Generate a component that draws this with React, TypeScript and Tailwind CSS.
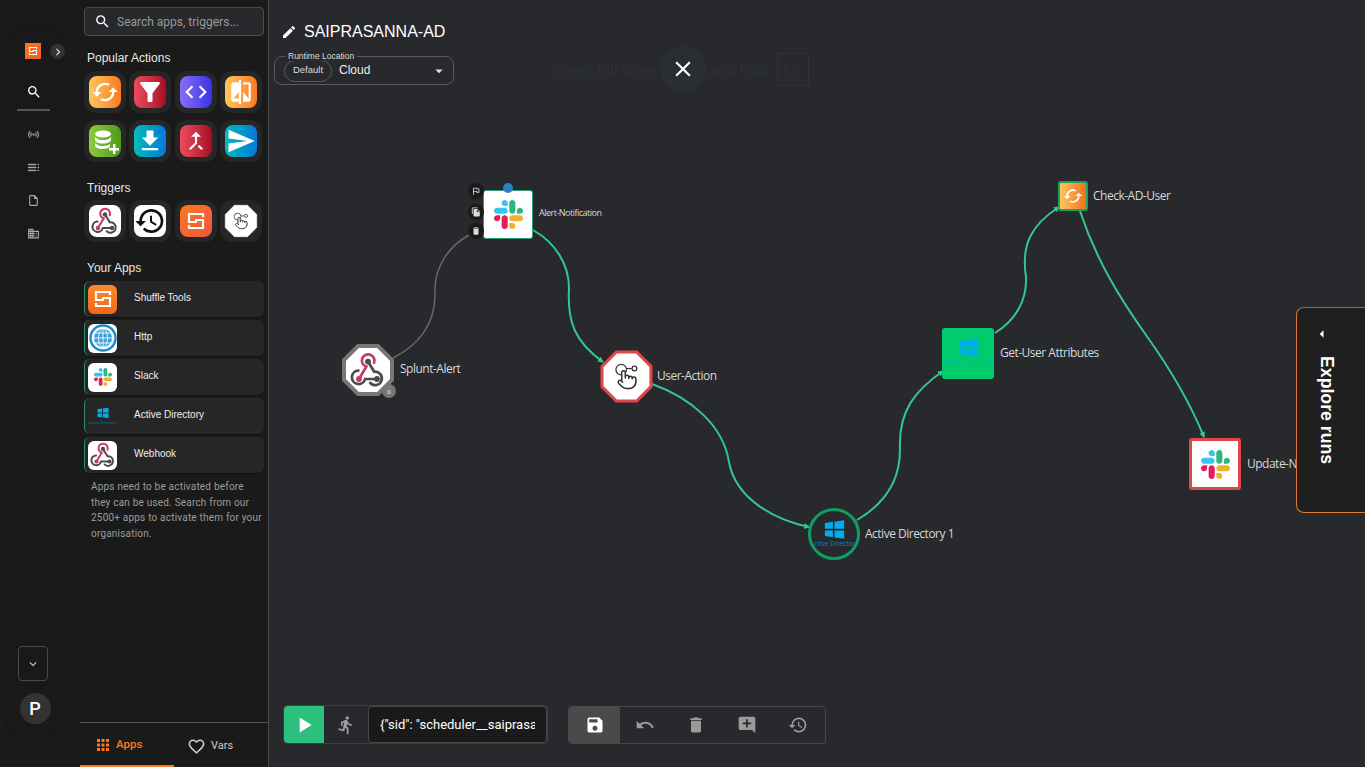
import React from "react";
import { Pointer } from "lucide-react";
import {
  MdCached, MdFilterAlt, MdCode, MdCompare, MdFileDownload, MdCallMerge, MdSend, MdHistory, MdSearch,
  MdChevronRight, MdExpandMore, MdOutlineSensors, MdOutlineInsertDriveFile, MdOutlineDomain,
  MdApps, MdFavoriteBorder, MdEdit, MdArrowDropDown, MdClose, MdPlayArrow, MdDirectionsRun, MdSave, MdUndo,
  MdDelete, MdAddComment, MdOutlineFlag, MdFileCopy, MdArrowLeft,
} from "react-icons/md";

const Slack = ({ className = "" }: { className?: string }) => (
  <svg viewBox="0 0 122.8 122.8" className={className}>
    <path fill="#E01E5A" d="M25.8 77.6c0 7.1-5.8 12.9-12.9 12.9S0 84.7 0 77.6s5.8-12.9 12.9-12.9h12.9v12.9zM32.3 77.6c0-7.1 5.8-12.9 12.9-12.9s12.9 5.8 12.9 12.9v32.3c0 7.1-5.8 12.9-12.9 12.9s-12.9-5.8-12.9-12.9V77.6z" />
    <path fill="#36C5F0" d="M45.2 25.8c-7.1 0-12.9-5.8-12.9-12.9S38.1 0 45.2 0s12.9 5.8 12.9 12.9v12.9H45.2zM45.2 32.3c7.1 0 12.9 5.8 12.9 12.9s-5.8 12.9-12.9 12.9H12.9C5.8 58.1 0 52.3 0 45.2s5.8-12.9 12.9-12.9h32.3z" />
    <path fill="#2EB67D" d="M97 45.2c0-7.1 5.8-12.9 12.9-12.9s12.9 5.8 12.9 12.9-5.8 12.9-12.9 12.9H97V45.2zM90.5 45.2c0 7.1-5.8 12.9-12.9 12.9s-12.9-5.8-12.9-12.9V12.9C64.7 5.8 70.5 0 77.6 0s12.9 5.8 12.9 12.9v32.3z" />
    <path fill="#ECB22E" d="M77.6 97c7.1 0 12.9 5.8 12.9 12.9s-5.8 12.9-12.9 12.9-12.9-5.8-12.9-12.9V97h12.9zM77.6 90.5c-7.1 0-12.9-5.8-12.9-12.9s5.8-12.9 12.9-12.9h32.3c7.1 0 12.9 5.8 12.9 12.9s-5.8 12.9-12.9 12.9H77.6z" />
  </svg>
);

const Webhook = ({ className = "" }: { className?: string }) => (
  <svg viewBox="0 0 32 32" className={className} fill="none" strokeWidth="2.4" strokeLinecap="round">
    <path stroke="#4b4b4b" d="M7.5 16.5A6 6 0 1 0 13.5 24H24" />
    <path stroke="#4b4b4b" d="M16 8.5L21.5 17.5A6 6 0 1 1 18 27.6" />
    <path stroke="#c73a63" d="M8 24L14.5 13A5.6 5.6 0 1 1 21.4 9.6" />
    <circle cx="8" cy="24" r="2.6" fill="#c73a63" />
    <circle cx="16" cy="8.5" r="2.6" fill="#4b4b4b" />
    <circle cx="24" cy="24" r="2.6" fill="#4b4b4b" />
  </svg>
);

const ShuffleMark = ({ className = "" }: { className?: string }) => (
  <svg viewBox="0 0 24 24" className={className} fill="none" stroke="white" strokeWidth="2.2">
    <path d="M19 8V5H5v8h8" />
    <path d="M5 16v3h14v-8h-8" />
  </svg>
);

const Windows = ({ className = "" }: { className?: string }) => (
  <svg viewBox="0 0 24 24" className={className} fill="#00adef">
    <path d="M1 4.500L10.200 3.200V11H1zM12 3L23 1.400V11H12zM1 13H10.200V20.800L1 19.500zM12 13H23V22.600L12 21z" />
  </svg>
);

const Octagon = ({ stroke, strokeWidth = 4, children, className = "" }: { stroke: string; strokeWidth?: number; children?: React.ReactNode; className?: string }) => (
  <svg viewBox="0 0 52 52" className={className}>
    <polygon points="16,2 36,2 50,16 50,36 36,50 16,50 2,36 2,16" fill="white" stroke={stroke} strokeWidth={strokeWidth} />
    {children}
  </svg>
);

const TouchMark = ({ size }: { size: number }) => {
  const off = (52 - size) / 2;
  return (
    <>
      <circle cx={off + size * 0.3} cy={off + size * 0.24} r={size * 0.2} fill="none" stroke="#333" strokeWidth="1.2" />
      <circle cx={off + size * 0.8} cy={off + size * 0.2} r={size * 0.09} fill="none" stroke="#333" strokeWidth="1.2" />
      <path d={`M${off + size * 0.5} ${off + size * 0.2}H${off + size * 0.7}`} stroke="#333" strokeWidth="1.2" />
      <Pointer x={off + size * 0.12} y={off + size * 0.22} width={size * 0.8} height={size * 0.8} color="#333" strokeWidth={1.7} fill="white" />
    </>
  );
};

const DbPlus = () => (
  <svg viewBox="0 0 32 32" className="w-8 h-8">
    <g fill="white">
      <ellipse cx="14" cy="9" rx="8" ry="3.5" />
      <path d="M6 12c1.500 2 4.500 3.100 8 3.100s6.500-1.100 8-3.100v3c0 1.900-3.600 3.500-8 3.500S6 16.900 6 15z" />
      <path d="M6 18c1.500 2 4.500 3.100 8 3.100s5.500-.7 7-2v2.700c-1.500 1.300-4 2.200-7 2.200-4.400 0-8-1.600-8-3.500z" />
      <path d="M24 19h2.400v4H30v2.400h-3.600V29H24v-3.600h-4V23h4z" />
    </g>
  </svg>
);

// three bars with dots on the right, rail item
const ListDots = () => (
  <svg viewBox="0 0 14 14" className="w-[13px] h-[13px] mt-[20px]" fill="#aaa">
    <rect x="1" y="3" width="9" height="1.500" />
    <rect x="1" y="6.200" width="9" height="1.500" />
    <rect x="1" y="9.400" width="9" height="1.500" />
    <rect x="11.500" y="3" width="1.500" height="1.500" />
    <rect x="11.500" y="6.200" width="1.500" height="1.500" />
    <rect x="11.500" y="9.400" width="1.500" height="1.500" />
  </svg>
);

const popular = [
  { icon: <MdCached className="text-white text-[28px]" />, bg: "bg-gradient-to-r from-[#fcc65c] to-[#fb7a1e]" },
  { icon: <MdFilterAlt className="text-white text-[30px]" />, bg: "bg-gradient-to-r from-[#ee4b5e] to-[#a80a25]" },
  { icon: <MdCode className="text-white text-[26px]" />, bg: "bg-gradient-to-r from-[#8a6bf5] to-[#3a2fe8]" },
  { icon: <MdCompare className="text-white text-[26px]" />, bg: "bg-gradient-to-r from-[#fcc65c] to-[#fb7a1e]" },
  { icon: <DbPlus />, bg: "bg-gradient-to-r from-[#8ccc3c] to-[#4e9a1c]" },
  { icon: <MdFileDownload className="text-white text-[28px]" />, bg: "bg-gradient-to-r from-[#0fbcb8] to-[#0a78d8]" },
  { icon: <MdCallMerge className="text-white text-[26px]" />, bg: "bg-gradient-to-r from-[#ee4b5e] to-[#a80a25]" },
  { icon: <MdSend className="text-white text-[30px]" />, bg: "bg-gradient-to-r from-[#0fbcb8] to-[#0a78d8]" },
];

const Tile = ({ children, className = "" }: { children: React.ReactNode; className?: string }) => (
  <div className="w-[42px] h-[42px] rounded-xl bg-[#262626] flex items-center justify-center">
    <div className={`w-8 h-8 rounded-lg flex items-center justify-center overflow-hidden ${className}`}>{children}</div>
  </div>
);

const yourApps = [
  { name: "Shuffle Tools", icon: <div className="w-full h-full bg-gradient-to-b from-[#fb8a2a] to-[#f2661a] flex items-center justify-center"><ShuffleMark className="w-6 h-6" /></div> },
  {
    name: "Http",
    icon: (
      <div className="w-full h-full bg-white flex items-center justify-center">
        <svg viewBox="0 0 28 28" className="w-[28px] h-[28px]" fill="none" stroke="#1e8ccc">
          <circle cx="14" cy="14" r="12.500" strokeWidth="2.500" />
          <circle cx="14" cy="14" r="9.500" fill="#3aa0dc" stroke="none" />
          <g stroke="white" strokeWidth="0.9">
            <circle cx="14" cy="14" r="9.500" />
            <ellipse cx="14" cy="14" rx="4.500" ry="9.500" />
            <path d="M14 4.500V23.500M4.500 14H23.500M6 9H22M6 19H22" />
          </g>
        </svg>
      </div>
    ),
  },
  { name: "Slack", icon: <div className="w-full h-full bg-white flex items-center justify-center"><Slack className="w-[18px] h-[18px]" /></div> },
  {
    name: "Active Directory",
    icon: (
      <div className="w-full h-full flex flex-col items-center justify-center">
        <Windows className="w-3 h-3" />
        <span className="text-[4px] leading-[5px] mt-px text-[#0a6ea8] whitespace-nowrap">Active Directory</span>
      </div>
    ),
  },
  { name: "Webhook", icon: <div className="w-full h-full bg-white flex items-center justify-center"><Webhook className="w-[26px] h-[26px]" /></div> },
];

const Label = ({ className, children }: { className: string; children: React.ReactNode }) => (
  <span className={`absolute -translate-y-1/2 text-[12px] text-[#d8d8d8] whitespace-nowrap font-['Open_Sans',sans-serif] tracking-[-0.5px] ${className}`}>
    {children}
  </span>
);

const Edges = () => (
  <svg viewBox="0 0 1097 767" className="absolute inset-0 w-[1097px] h-[767px]" fill="none" strokeWidth="2" stroke="#33c692">
    <defs>
      <marker id="arrow" markerWidth="7" markerHeight="7" refX="5" refY="3" orient="auto" markerUnits="userSpaceOnUse">
        <path d="M0 0L6 3L0 6z" fill="#33c692" stroke="none" />
      </marker>
    </defs>
    <path stroke="#686868" strokeWidth="1.500" d="M124 358C148 346 167 325 166 292C165 265 182 245 200 235" />
    <path markerEnd="url(#arrow)" d="M264 230C287 243 300 265 300 288C298 322 306 342 334 362" />
    <path markerEnd="url(#arrow)" d="M383 384C422 398 454 425 460 462C467 500 507 520 540 527" />
    <path markerEnd="url(#arrow)" d="M588 520C617 503 631 480 631 450C629 410 647 390 674 371" />
    <path markerEnd="url(#arrow)" d="M726 333C747 320 758 300 757 277C752 245 762 225 790 207" />
    <path markerEnd="url(#arrow)" d="M811 211C827 260 852 300 877 335C902 370 922 405 935 437" />
  </svg>
);

export default function App() {
  return (
    <div className="h-screen w-full overflow-hidden flex bg-[#1a1a1a] text-white font-['Roboto',sans-serif]">
      {/* Left rail */}
      <div className="w-20 shrink-0 bg-[#1a1a1a] pl-[7px] pt-[25px] pb-[29px]">
        <div className="relative w-[53px] h-full rounded-2xl bg-[#191919] shadow-[0_0_2px_#141414] flex flex-col items-center pt-[18px]">
          <div className="w-4 h-4 bg-gradient-to-br from-[#fb7a1e] to-[#ee5a2c] flex items-center justify-center -ml-[1px]">
            <ShuffleMark className="w-3 h-3" />
          </div>
          <div className="absolute left-[43px] top-[19px] w-[15px] h-[15px] rounded-full bg-[#333] flex items-center justify-center">
            <MdChevronRight className="text-[14px] text-[#ddd]" />
          </div>
          <MdSearch className="text-[16px] text-white mt-[25px]" />
          <div className="w-[33px] h-[2px] bg-[#555] mt-[9px]" />
          <MdOutlineSensors className="text-[13px] text-[#aaa] mt-[17px]" />
          <ListDots />
          <MdOutlineInsertDriveFile className="text-[13px] text-[#aaa] mt-[20px]" />
          <MdOutlineDomain className="text-[13px] text-[#aaa] mt-[20px]" />
          <div className="mt-auto -ml-[2px] w-[30px] h-[35px] rounded-[4px] border border-[#4a4a4a] flex items-center justify-center">
            <MdExpandMore className="text-[14px] text-[#ccc]" />
          </div>
          <div className="w-[31px] h-[31px] ml-[3px] rounded-full bg-[#333] mt-[12px] mb-[14px] flex items-center justify-center text-[18px] font-medium">P</div>
        </div>
      </div>

      {/* Apps panel */}
      <div className="w-[189px] shrink-0 border-r border-[#4a4a4a] flex flex-col">
        <div className="flex-1 pl-1 pr-1">
          <div className="mt-[7px] h-[29px] w-[180px] rounded border border-[#4a4a4a] bg-[#27292d] flex items-center pl-[9px]">
            <MdSearch className="text-[17px] text-white" />
            <span className="ml-[6px] text-[12px] text-[#9a9a9a]">Search apps, triggers...</span>
          </div>
          <div className="text-[12px] text-[#e8e8e8] ml-[3px] mt-[15px] leading-[14px] font-['Liberation_Sans',sans-serif]">Popular Actions</div>
          <div className="grid grid-cols-[repeat(4,42px)] gap-x-[3.300px] gap-y-[7px] mt-[6px]">
            {popular.map((p, i) => (
              <Tile key={i} className={p.bg}>{p.icon}</Tile>
            ))}
          </div>
          <div className="text-[12px] text-[#e8e8e8] ml-[3px] mt-[19px] leading-[14px] font-['Liberation_Sans',sans-serif]">Triggers</div>
          <div className="grid grid-cols-[repeat(4,42px)] gap-x-[3.300px] mt-[5px]">
            <Tile className="bg-white"><Webhook className="w-7 h-7" /></Tile>
            <Tile className="bg-white"><MdHistory className="text-[34px] text-[#111]" /></Tile>
            <Tile className="bg-gradient-to-br from-[#fb7a10] to-[#ee5440]"><ShuffleMark className="w-6 h-6" /></Tile>
            <div className="w-[42px] h-[42px] rounded-xl bg-[#262626] flex items-center justify-center">
              <Octagon stroke="white" strokeWidth={1} className="w-[34px] h-[34px]"><TouchMark size={26} /></Octagon>
            </div>
          </div>
          <div className="text-[12px] text-[#e8e8e8] ml-[3px] mt-[19px] leading-[14px] font-['Liberation_Sans',sans-serif]">Your Apps</div>
          <div className="flex flex-col gap-[3px] mt-[6px]">
            {yourApps.map((a) => (
              <div key={a.name} className="h-[36px] w-[180px] rounded-md bg-[#262626] border-l border-l-[#2f8f6c] flex items-center pl-[3px] shadow-[0_1px_0_#111]">
                <div className="w-[29px] h-[29px] rounded-md overflow-hidden shrink-0">{a.icon}</div>
                <span className="ml-[17px] mb-[3px] text-[10px] text-[#eee] font-['Liberation_Sans',sans-serif]">{a.name}</span>
              </div>
            ))}
          </div>
          <p className="ml-[7px] mt-[6px] w-[174px] text-[10px] leading-[15.500px] tracking-[0.2px] text-[#9c9c9c]">
            Apps need to be activated before<br />they can be used. Search from our<br />2500+ apps to activate them for your<br />organisation.
          </p>
        </div>
        <div className="h-[45px] border-t border-[#555] flex">
          <div className="w-[94px] h-full border-b-2 border-[#fb7a1e] pt-[2px] flex items-center pl-[14px] gap-[4px] text-[#fb7a1e]">
            <MdApps className="text-[18px]" />
            <span className="text-[11.500px] font-medium">Apps</span>
          </div>
          <div className="flex-1 flex items-center pl-[13px] gap-[5px] pt-[2px]">
            <MdFavoriteBorder className="text-[19px] text-[#ccc]" />
            <span className="text-[11px] text-[#ccc]">Vars</span>
          </div>
        </div>
      </div>

      {/* Workflow canvas */}
      <div className="relative flex-1 bg-[#27292d] overflow-hidden">
        <Edges />

        <div className="absolute left-[12px] top-[20px] flex items-center gap-[7px]">
          <MdEdit className="text-[16px] text-white" />
          <span className="text-[16px] font-['Liberation_Sans',sans-serif]">SAIPRASANNA-AD</span>
        </div>

        <div className="absolute left-[5px] top-[56px] w-[180px] h-[29px] rounded-lg border border-[#5a5a5a] flex items-center pl-[9px] font-['Liberation_Sans',sans-serif]">
          <span className="absolute left-[10px] -top-[6px] bg-[#27292d] px-[3px] text-[8.500px] leading-[10px] text-[#ddd]">Runtime Location</span>
          <span className="h-[22px] w-[48px] rounded-full border border-[#5a5a5a] flex items-center justify-center text-[9.500px] text-[#ddd]">Default</span>
          <span className="ml-[7px] mb-[1px] text-[12px] text-[#eee]">Cloud</span>
          <MdArrowDropDown className="absolute right-[5px] top-[5px] text-[18px] text-[#ddd]" />
        </div>

        {/* Faded fullscreen hint */}
        <div className="absolute left-[281px] top-[53px] flex items-center gap-[8px] text-[14px] text-[#2e3136] font-['Open_Sans',sans-serif] whitespace-nowrap">
          <span>To exit full screen, press and hold</span>
          <span className="w-[32px] h-[33px] border border-[#2e3136] flex items-center justify-center text-[12px]">Esc</span>
        </div>
        <div className="absolute left-[391px] top-[46px] w-[46px] h-[46px] rounded-full bg-[#2a2d34] flex items-center justify-center">
          <MdClose className="text-[26px] text-white" />
        </div>

        {/* Nodes */}
        <Octagon stroke="#777" strokeWidth={4} className="absolute left-[73px] top-[344px] w-[52px] h-[52px]" />
        <Webhook className="absolute left-[81px] top-[352px] w-[36px] h-[36px]" />
        <div className="absolute left-[113px] top-[384px] w-[14px] h-[14px] rounded-full bg-[#777] flex items-center justify-center text-[6px] text-[#eee]">0</div>
        <Label className="left-[131px] top-[369px]">Splunt-Alert</Label>

        <div className="absolute left-[214px] top-[190px] w-[50px] h-[49px] rounded-[3px] bg-white border border-[#2a9d78] flex items-center justify-center">
          <Slack className="w-[29px] h-[29px]" />
        </div>
        <div className="absolute left-[234px] top-[183px] w-[10px] h-[10px] rounded-full bg-[#2e7fc0]" />
        {[
          { top: 183, icon: <MdOutlineFlag /> },
          { top: 204, icon: <MdFileCopy /> },
          { top: 223, icon: <MdDelete /> },
        ].map((b) => (
          <div key={b.top} className="absolute left-[199px] w-[16px] h-[16px] rounded-full bg-[#1a1a1a] flex items-center justify-center text-[10px] text-[#ddd]" style={{ top: b.top }}>
            {b.icon}
          </div>
        ))}
        <span className="absolute left-[270px] top-[213px] -translate-y-1/2 text-[9px] text-[#d8d8d8] tracking-[-0.5px] whitespace-nowrap font-['Open_Sans',sans-serif]">Alert-Notification</span>

        <Octagon stroke="#e04848" strokeWidth={3} className="absolute left-[331px] top-[350px] w-[53px] h-[53px]"><TouchMark size={26} /></Octagon>
        <Label className="left-[388px] top-[376px]">User-Action</Label>

        <div className="absolute left-[539px] top-[508px] w-[52px] h-[52px] rounded-full border-[3px] border-[#129b62] flex flex-col items-center justify-center overflow-hidden">
          <Windows className="w-[21px] h-[21px] -mt-[2px]" />
          <span className="text-[7px] leading-[8px] text-[#0a7cc0] whitespace-nowrap">Active Directory</span>
        </div>
        <Label className="left-[596px] top-[534px]">Active Directory 1</Label>

        <div className="absolute left-[673px] top-[328px] w-[52px] h-[51px] rounded-[3px] bg-[#00cc6e] flex flex-col items-center justify-center overflow-hidden">
          <Windows className="w-[21px] h-[21px] -mt-[4px]" />
          <span className="text-[7px] leading-[8px] text-[#0ab8a8] whitespace-nowrap">Active Directory</span>
        </div>
        <Label className="left-[731px] top-[353px]">Get-User Attributes</Label>

        <div className="absolute left-[789px] top-[181px] w-[30px] h-[30px] rounded-[3px] border-[2px] border-[#15a366] bg-gradient-to-r from-[#fcc65c] to-[#f2701a] flex items-center justify-center">
          <MdCached className="text-[20px] text-white" />
        </div>
        <Label className="left-[824px] top-[196px]">Check-AD-User</Label>

        <div className="absolute left-[920px] top-[438px] w-[52px] h-[52px] rounded-[3px] border-[3px] border-[#e04848] bg-white flex items-center justify-center">
          <Slack className="w-[29px] h-[29px]" />
        </div>
        <Label className="left-[978px] top-[464px]">Update-Notification</Label>

        {/* Explore runs drawer */}
        <div className="absolute right-0 top-[307px] w-[69px] h-[206px] rounded-l-lg border border-r-0 border-[#e07a30] border-t-[#3d83b8] bg-[#1f1f1f] flex flex-col items-center pr-[10px]">
          <MdArrowLeft className="text-[18px] text-white mt-[17px] -ml-[9px]" />
          <span className="mt-[13px] ml-[1px] text-[17.700px] leading-[20px] font-bold font-['Liberation_Sans',sans-serif] [writing-mode:vertical-rl] whitespace-nowrap">Explore runs</span>
        </div>

        {/* Bottom toolbars */}
        <div className="absolute left-[14px] bottom-[23px] flex items-stretch h-[39px] rounded border border-[#3c3e42]">
          <div className="w-[40px] rounded-l bg-[#2bc07e] flex items-center justify-center">
            <MdPlayArrow className="text-[26px] text-white" />
          </div>
          <div className="w-[44px] flex items-center justify-center">
            <MdDirectionsRun className="text-[20px] text-[#a0a0a0]" />
          </div>
          <div className="w-[179px] bg-[#1a1a1a] border border-[#4a4a4a] rounded-sm flex items-center pl-[11px] overflow-hidden">
            <span className="text-[13px] text-white whitespace-nowrap w-[155px] overflow-hidden">{'{"sid": "scheduler__saiprasanna'}</span>
          </div>
        </div>
        <div className="absolute left-[299px] bottom-[23px] flex items-stretch h-[38px] rounded border border-[#46484c] overflow-hidden">
          <div className="w-[51px] bg-[#4a4a4a] flex items-center justify-center">
            <MdSave className="text-[20px] text-white" />
          </div>
          {[<MdUndo key="u" />, <MdDelete key="d" />, <MdAddComment key="a" />, <MdHistory key="h" />].map((ic, i) => (
            <div key={i} className="w-[51.250px] pr-[2px] flex items-center justify-center text-[20px] text-[#9a9a9a]">{ic}</div>
          ))}
        </div>
      </div>
    </div>
  );
}
